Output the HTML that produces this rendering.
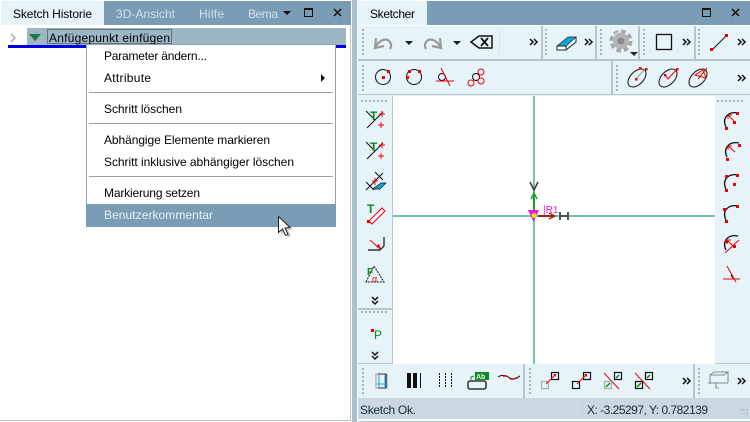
<!DOCTYPE html>
<html>
<head>
<meta charset="utf-8">
<style>
html,body{margin:0;padding:0;background:#fff;width:750px;height:422px;overflow:hidden}
svg{display:block}
text{font-family:"Liberation Sans",sans-serif;font-size:12px;fill:#000}
</style>
</head>
<body>
<svg width="750" height="422" viewBox="0 0 750 422" xmlns="http://www.w3.org/2000/svg">
<defs>
<g id="grip" fill="#a9b4bb"><rect x="0" y="0" width="2" height="2"/><rect x="0" y="4" width="2" height="2"/><rect x="0" y="8" width="2" height="2"/><rect x="0" y="12" width="2" height="2"/><rect x="0" y="16" width="2" height="2"/><rect x="0" y="20" width="2" height="2"/><rect x="0" y="24" width="2" height="2"/></g>
<g id="griph" fill="#a9b4bb"><rect x="0" y="0" width="2" height="2"/><rect x="4" y="0" width="2" height="2"/><rect x="8" y="0" width="2" height="2"/><rect x="12" y="0" width="2" height="2"/><rect x="16" y="0" width="2" height="2"/><rect x="20" y="0" width="2" height="2"/><rect x="24" y="0" width="2" height="2"/></g>
<path id="more" d="M0 0l3 3-3 3M4 0l3 3-3 3" fill="none" stroke="#111" stroke-width="1.500"/>
<path id="down" d="M0 0l3 3 3-3M0 4l3 3 3-3" fill="none" stroke="#111" stroke-width="1.500"/>
</defs>

<rect width="750" height="422" fill="#fff"/>
<!-- gutters -->
<rect x="352" y="0" width="5" height="422" fill="#a9c0d1"/>
<rect x="350" y="25" width="1" height="395" fill="#b5c3cc"/>
<rect x="0" y="420" width="351" height="1" fill="#b5c3cc"/>

<!-- left title bar -->
<rect x="1" y="1" width="350" height="24" fill="#7a9db5"/>
<rect x="1" y="1" width="103" height="24" fill="#e6f3f9"/>
<text x="13" y="18" textLength="79">Sketch Historie</text>
<text x="116" y="18" textLength="59" style="fill:#d0e0ea">3D-Ansicht</text>
<text x="199" y="18" textLength="25" style="fill:#d0e0ea">Hilfe</text>
<text x="248" y="18" textLength="30" style="fill:#d0e0ea">Bema</text>
<path d="M283 11h8l-4 4z" fill="#111"/>
<rect x="304.500" y="8.500" width="8" height="8" fill="none" stroke="#111" stroke-width="1"/>
<rect x="304" y="8" width="9" height="2" fill="#111"/>
<path d="M334 9l7 7M341 9l-7 7" stroke="#111" stroke-width="1.500" fill="none"/>

<!-- tree row -->
<path d="M11 34l4 4-4 4" fill="none" stroke="#aaa" stroke-width="1.500"/>
<rect x="27" y="28" width="319" height="18" fill="#9db6c4"/>
<path d="M29 34h12l-6 7z" fill="#127a45"/>
<path d="M33 39h4l-2 2z" fill="#a33"/>
<rect x="47.500" y="29.500" width="124" height="14" fill="none" stroke="#333" stroke-width="1" stroke-dasharray="1 1"/>
<text x="49" y="42" textLength="121">Anfügepunkt einfügen</text>
<rect x="8" y="45" width="338" height="3" fill="#0000e6"/>

<!-- context menu -->
<rect x="86.500" y="44.500" width="249" height="182" fill="#fff" stroke="#8ba5b7"/>
<text x="104" y="60" textLength="103">Parameter ändern...</text>
<text x="104" y="82" textLength="47">Attribute</text>
<path d="M321 74l4 4-4 4z" fill="#111"/>
<rect x="89" y="92" width="244" height="1" fill="#a0a0a0"/>
<text x="104" y="113" textLength="78">Schritt löschen</text>
<rect x="89" y="123" width="244" height="1" fill="#a0a0a0"/>
<text x="104" y="144" textLength="166">Abhängige Elemente markieren</text>
<text x="104" y="166" textLength="190">Schritt inklusive abhängiger löschen</text>
<rect x="89" y="176" width="244" height="1" fill="#a0a0a0"/>
<text x="104" y="197" textLength="96">Markierung setzen</text>
<rect x="86" y="204" width="250" height="23" fill="#7a9db5"/>
<text x="104" y="219" textLength="109" style="fill:#e8f1f6">Benutzerkommentar</text>
<!-- cursor -->
<path d="M279 217v17l4-3.500 3 6 3-1.500-3-6 5.500-.5z" fill="#222" opacity=".25" transform="translate(2 1)"/>
<path d="M278.500 216.500v16l4-3.500 3 6.500 2.500-1.200-3-6.300 5-.5z" fill="#fff" stroke="#222" stroke-width="1"/>

<!-- right panel -->
<rect x="358" y="1" width="392" height="24" fill="#7a9db5"/>
<rect x="358" y="1" width="69" height="24" fill="#e6f3f9"/>
<text x="370" y="18" textLength="45">Sketcher</text>
<rect x="702.500" y="8.500" width="8" height="8" fill="none" stroke="#111"/>
<rect x="702" y="8" width="9" height="2" fill="#111"/>
<path d="M732 9l7 7M739 9l-7 7" stroke="#111" stroke-width="1.500" fill="none"/>

<!-- toolbars background -->
<rect x="358" y="26" width="392" height="33" fill="#e6f3f9"/>
<rect x="358" y="59" width="392" height="2" fill="#b9c5cc"/>
<rect x="358" y="61" width="392" height="33" fill="#e6f3f9"/>
<rect x="358" y="94" width="392" height="1" fill="#b9c5cc"/>
<rect x="358" y="95" width="392" height="1" fill="#e6f3f9"/>
<rect x="541" y="26" width="2" height="33" fill="#b9c5cc"/>
<rect x="595" y="26" width="2" height="33" fill="#b9c5cc"/>
<rect x="638" y="26" width="2" height="33" fill="#b9c5cc"/>
<rect x="694" y="26" width="2" height="33" fill="#b9c5cc"/>
<rect x="611" y="61" width="2" height="33" fill="#b9c5cc"/>
<rect x="499" y="30" width="1" height="24" fill="#d8e3e9"/>

<use href="#grip" x="362" y="29"/>
<use href="#grip" x="362" y="65"/>
<use href="#grip" x="545" y="29"/>
<use href="#grip" x="600" y="29"/>
<use href="#grip" x="643" y="29"/>
<use href="#grip" x="698" y="29"/>
<use href="#grip" x="616" y="65"/>

<!-- undo/redo -->
<path d="M376 38l-1 10 9-2M375 47c5-7 11-10 15-5 2 3 1 5 0 7" fill="none" stroke="#9a9a9a" stroke-width="2.200"/>
<path d="M405 41h8l-4 4z" fill="#222"/>
<path d="M440 38l1 10-9-2M441 47c-5-7-11-10-15-5-2 3-1 5 0 7" fill="none" stroke="#9a9a9a" stroke-width="2.200"/>
<path d="M453 41h8l-4 4z" fill="#222"/>
<path d="M471 42l8-6h13v12h-13z" fill="none" stroke="#111" stroke-width="1.500"/>
<path d="M481 38l7 8M488 38l-7 8" stroke="#111" stroke-width="1.800"/>
<use href="#more" x="530" y="39"/>
<!-- eraser -->
<path d="M557 46l11-9h8l-10 9z" fill="#12a6e0" stroke="#222" stroke-width=".7"/>
<path d="M557 46h9v4h-9z" fill="#fff" stroke="#222"/>
<path d="M566 50l10-8v-5" fill="none" stroke="#222"/>
<use href="#more" x="585" y="39"/>
<!-- gear -->
<circle cx="621" cy="41" r="8.500" fill="none" stroke="#a8a8a8" stroke-width="6" stroke-dasharray="4 2.670"/>
<circle cx="621" cy="41" r="8" fill="#b4b4b4"/>
<circle cx="621" cy="41" r="3.500" fill="#8a8a8a"/>
<path d="M613 37a9 9 0 0 1 8-5" fill="none" stroke="#d8d8d8" stroke-width="1.500"/>
<path d="M630 52h8l-4 4z" fill="#222"/>
<!-- rect -->
<rect x="656.500" y="34.500" width="15" height="15" fill="none" stroke="#111" stroke-width="1.300"/>
<use href="#more" x="683" y="39"/>
<!-- line -->
<path d="M712 50l14-14" stroke="#111" stroke-width="1"/>
<rect x="710" y="48" width="3" height="3" fill="#e00"/>
<rect x="725" y="34" width="3" height="3" fill="#e00"/>
<use href="#more" x="738" y="39"/>

<!-- row 2 -->
<circle cx="383" cy="77" r="7.500" fill="none" stroke="#111"/>
<rect x="382" y="76" width="3" height="3" fill="#e00"/>
<rect x="387" y="70" width="3" height="3" fill="#e00"/>
<circle cx="414" cy="77" r="7.500" fill="none" stroke="#111"/>
<rect x="418" y="70" width="3" height="3" fill="#e00"/>
<rect x="408" y="70" width="3" height="3" fill="#e00"/>
<rect x="406" y="76" width="3" height="3" fill="#e00"/>
<circle cx="442" cy="77" r="3.500" fill="none" stroke="#111"/>
<path d="M436 81h18M441 68l9 18" stroke="#e00" stroke-width="1"/>
<circle cx="476" cy="77" r="3.500" fill="none" stroke="#111"/>
<circle cx="471" cy="83" r="3" fill="none" stroke="#e00"/>
<circle cx="481" cy="72" r="3" fill="none" stroke="#e00"/>
<circle cx="481" cy="81" r="3" fill="none" stroke="#e00"/>
<!-- ellipses -->
<g transform="rotate(-45 637 78)"><ellipse cx="637" cy="78" rx="11" ry="6.500" fill="none" stroke="#111"/></g>
<path d="M636 79l9-10" stroke="#999"/>
<rect x="635" y="78" width="2.500" height="2.500" fill="#e00"/>
<rect x="639" y="67" width="2.500" height="2.500" fill="#e00"/>
<rect x="645" y="68" width="2.500" height="2.500" fill="#e00"/>
<g transform="rotate(-45 668 78)"><ellipse cx="668" cy="78" rx="11" ry="6.500" fill="none" stroke="#111"/></g>
<path d="M665 75l3 4 9-10" stroke="#e00" fill="none"/>
<rect x="664" y="74" width="2.500" height="2.500" fill="#e00"/>
<rect x="676" y="68" width="2.500" height="2.500" fill="#e00"/>
<g transform="rotate(-45 698 78)"><ellipse cx="698" cy="78" rx="11" ry="6.500" fill="none" stroke="#111"/></g>
<path d="M695 75l11 3-3-8zM698 79l9-11" stroke="#e00" fill="none"/>
<use href="#more" x="738" y="75"/>

<!-- canvas -->
<rect x="393" y="96" width="322" height="268" fill="#fff"/>
<rect x="393" y="215" width="322" height="2" fill="#6fc6ae"/>
<rect x="533" y="96" width="2" height="268" fill="#6fc6ae"/>
<path d="M534 212v-18" stroke="#11a52c" stroke-width="2"/>
<path d="M531 199l3-6 3 6" stroke="#11a52c" stroke-width="1.500" fill="none"/>
<path d="M530 182l4 8 4-8" stroke="#444" stroke-width="1.700" fill="none"/>
<path d="M538 216h17" stroke="#a12012" stroke-width="2"/>
<path d="M549 213l6 3-6 3" stroke="#a12012" stroke-width="1.300" fill="none"/>
<path d="M560 212v8M568 212v8M560 216h8" stroke="#444" stroke-width="1.800" fill="none"/>
<path d="M528 210h11l-5.500 12z" fill="#f018d8"/>
<circle cx="534" cy="215.500" r="2.500" fill="#e8e000"/>
<text x="543" y="213" style="fill:#f018d8;font-size:10px">|R1</text>

<!-- left toolbar -->
<rect x="358" y="96" width="35" height="268" fill="#e6f3f9"/>
<rect x="392" y="96" width="1" height="268" fill="#b9c5cc"/>
<rect x="358" y="308" width="35" height="2" fill="#b9c5cc"/>
<use href="#griph" x="361" y="100"/>
<use href="#griph" x="361" y="311"/>
<!-- icons -->
<path d="M366 111l9 9M383 112l-16 16" stroke="#111" fill="none"/>
<text x="370" y="120" style="fill:#0a8a1a;font-size:12px;font-weight:bold">T</text>
<path d="M382 111v6M379 114h6M381 122v6M378 125h6" stroke="#e00"/>
<path d="M366 142l9 9M383 143l-16 16" stroke="#111" fill="none"/>
<text x="370" y="151" style="fill:#0a8a1a;font-size:12px;font-weight:bold">T</text>
<path d="M382 142v6M379 145h6M381 153v6M378 156h6" stroke="#e00"/>
<path d="M375 172l8 8M383 173l-17 17M366 182l8 8" stroke="#111" fill="none"/>
<path d="M375 178v7M372 181h6" stroke="#e00"/>
<path d="M374 188l7-5h5l-6 6h-7z" fill="#12a6e0" stroke="#111" stroke-width=".7"/>
<text x="367" y="213" style="fill:#0a8a1a;font-size:12px;font-weight:bold">T</text>
<path d="M369 221l13-13 3 3-13 13z" fill="#fff" stroke="#e00"/>
<rect x="367" y="220" width="3" height="3" fill="#e00"/>
<path d="M368 250h12l4-4v-9" stroke="#111" stroke-width="1.200" fill="none"/>
<path d="M370 240l10 9" stroke="#e00" fill="none"/>
<path d="M376 246l5 3-2-5" fill="#e00"/>
<text x="367" y="275" style="fill:#0a8a1a;font-size:10px;font-weight:bold">F</text>
<path d="M366 282l8-16 10 16z" fill="none" stroke="#111" stroke-dasharray="2 1"/>
<text x="372" y="282" style="fill:#e00;font-size:9px">α</text>
<use href="#down" x="372" y="297"/>
<rect x="371" y="329" width="3" height="3" fill="#e00"/>
<text x="374" y="339" style="fill:#0a8a1a;font-size:12px">P</text>
<use href="#down" x="372" y="352"/>

<!-- right toolbar -->
<rect x="715" y="96" width="35" height="268" fill="#e6f3f9"/>
<use href="#griph" x="717" y="100"/>
<g fill="none" stroke="#111" stroke-width="1.300">
<path d="M726 127c-4-8 1-16 12-14"/>
<path d="M727 157c-4-8 1-16 12-14"/>
<path d="M726 189c-4-8 1-16 12-14"/>
<path d="M726 220c-4-8 1-16 12-14"/>
<path d="M726 250c-4-8 1-16 12-14"/>
<path d="M731 275l3 4"/>
</g>
<g stroke="#e00" fill="none">
<path d="M728 115l6 6M728 115h4M728 115v4"/>
<path d="M728 146l7 6M728 146h4M728 146v4"/>
<path d="M727 240l6 6M727 240h4M727 240v4M725 253l14-13"/>
<path d="M727 266l9 16M723 279h17"/>
</g>
<g fill="#e00">
<rect x="736" y="112" width="3" height="3"/><rect x="733" y="121" width="3" height="3"/><rect x="725" y="127" width="3" height="3"/>
<rect x="738" y="144" width="3" height="3"/><rect x="726" y="158" width="3" height="3"/>
<rect x="725" y="175" width="3" height="3"/><rect x="736" y="174" width="3" height="3"/><rect x="733" y="183" width="3" height="3"/><rect x="725" y="189" width="3" height="3"/>
<rect x="723" y="208" width="3" height="3"/><rect x="736" y="205" width="3" height="3"/><rect x="725" y="220" width="3" height="3"/>
<rect x="733" y="245" width="3" height="3"/><rect x="725" y="240" width="3" height="3"/>
</g>

<!-- bottom toolbar -->
<rect x="358" y="364" width="392" height="34" fill="#e6f3f9"/>
<rect x="358" y="363" width="35" height="1" fill="#b9c5cc"/>
<rect x="715" y="363" width="35" height="1" fill="#b9c5cc"/>
<rect x="523" y="364" width="2" height="34" fill="#b9c5cc"/>
<rect x="693" y="364" width="2" height="34" fill="#b9c5cc"/>
<use href="#grip" x="362" y="368"/>
<use href="#grip" x="529" y="368"/>
<use href="#grip" x="698" y="368"/>
<!-- bottom icons -->
<rect x="376" y="374" width="11" height="14" fill="none" stroke="#999"/>
<path d="M378 374h8v14h-8" stroke="#333" fill="none"/>
<path d="M377 384h10M379 374v14M385 374v14" stroke="#12a6e0" fill="none"/>
<rect x="407" y="373" width="4" height="15" fill="#111"/>
<rect x="413" y="373" width="4" height="15" fill="#111"/>
<rect x="420" y="373" width="1" height="15" fill="#111"/>
<path d="M439.500 373v15M445.500 373v15M451.500 373v15" stroke="#111" stroke-dasharray="2 1"/>
<rect x="468" y="381" width="18" height="8" rx="2" fill="none" stroke="#111" stroke-width="1.300"/>
<rect x="475" y="372" width="14" height="8" fill="#0a8a1a"/>
<text x="476" y="379" style="fill:#fff;font-size:7px;font-weight:bold">Ab</text>
<path d="M474 376l-3 1v3" stroke="#0a8a1a" fill="none"/>
<path d="M498 377c3-2 5-2 8-1s5 4 8 3 4-2 6-3" fill="none" stroke="#111"/>
<path d="M503 376h4M510 379h4M515 378h3" stroke="#e00" stroke-width="1.500"/>
<!-- constraint icons -->
<rect x="541.500" y="381.500" width="7" height="7" fill="none" stroke="#aaa" stroke-width="1.200"/>
<rect x="551.500" y="372.500" width="7" height="7" fill="none" stroke="#111" stroke-width="1.200"/>
<path d="M546 384l9-9" stroke="#e00"/>
<path d="M553 374h3v3z" fill="#e00"/>
<rect x="572.500" y="381.500" width="7" height="7" fill="none" stroke="#111" stroke-width="1.200"/>
<rect x="583.500" y="372.500" width="7" height="7" fill="none" stroke="#111" stroke-width="1.200"/>
<path d="M577 384l9-9" stroke="#e00"/>
<path d="M584 374h3v3z" fill="#e00"/>
<path d="M604 373l15 16M635 373l15 16" stroke="#e00" fill="none"/>
<rect x="604.500" y="381.500" width="7" height="7" fill="none" stroke="#aaa" stroke-width="1.200"/>
<rect x="614.500" y="372.500" width="7" height="7" fill="none" stroke="#111" stroke-width="1.200"/>
<path d="M606 387l4-4M616 378l3-3" stroke="#0a8a1a" stroke-width="1.500"/>
<rect x="635.500" y="381.500" width="7" height="7" fill="none" stroke="#111" stroke-width="1.200"/>
<rect x="645.500" y="372.500" width="7" height="7" fill="none" stroke="#111" stroke-width="1.200"/>
<path d="M637 387l4-4M647 378l3-3" stroke="#0a8a1a" stroke-width="1.500"/>
<use href="#more" x="683" y="378"/>
<path d="M710 383v-8h14l4-3v11" fill="none" stroke="#888"/>
<path d="M710 375l4-3h14M708 383h20M716 383v5h3" fill="none" stroke="#888"/>
<use href="#more" x="738" y="378"/>

<!-- status bar -->
<rect x="358" y="398" width="392" height="21" fill="#c9d8e2"/>
<rect x="358" y="421" width="392" height="1" fill="#b5c3cc"/>
<rect x="582" y="400" width="1" height="18" fill="#c3d2dc"/>
<rect x="730" y="400" width="1" height="18" fill="#c3d2dc"/>
<text x="360" y="414" textLength="56" style="fill:#1a2a36">Sketch Ok.</text>
<text x="587" y="414" textLength="121" style="fill:#1a2a36">X: -3.25297, Y: 0.782139</text>
<g fill="#b4c3cd"><rect x="746" y="409" width="2" height="2"/><rect x="743" y="409" width="2" height="2"/><rect x="740" y="409" width="2" height="2"/><rect x="746" y="412" width="2" height="2"/><rect x="743" y="412" width="2" height="2"/><rect x="746" y="415" width="2" height="2"/></g>
</svg>
</body>
</html>
